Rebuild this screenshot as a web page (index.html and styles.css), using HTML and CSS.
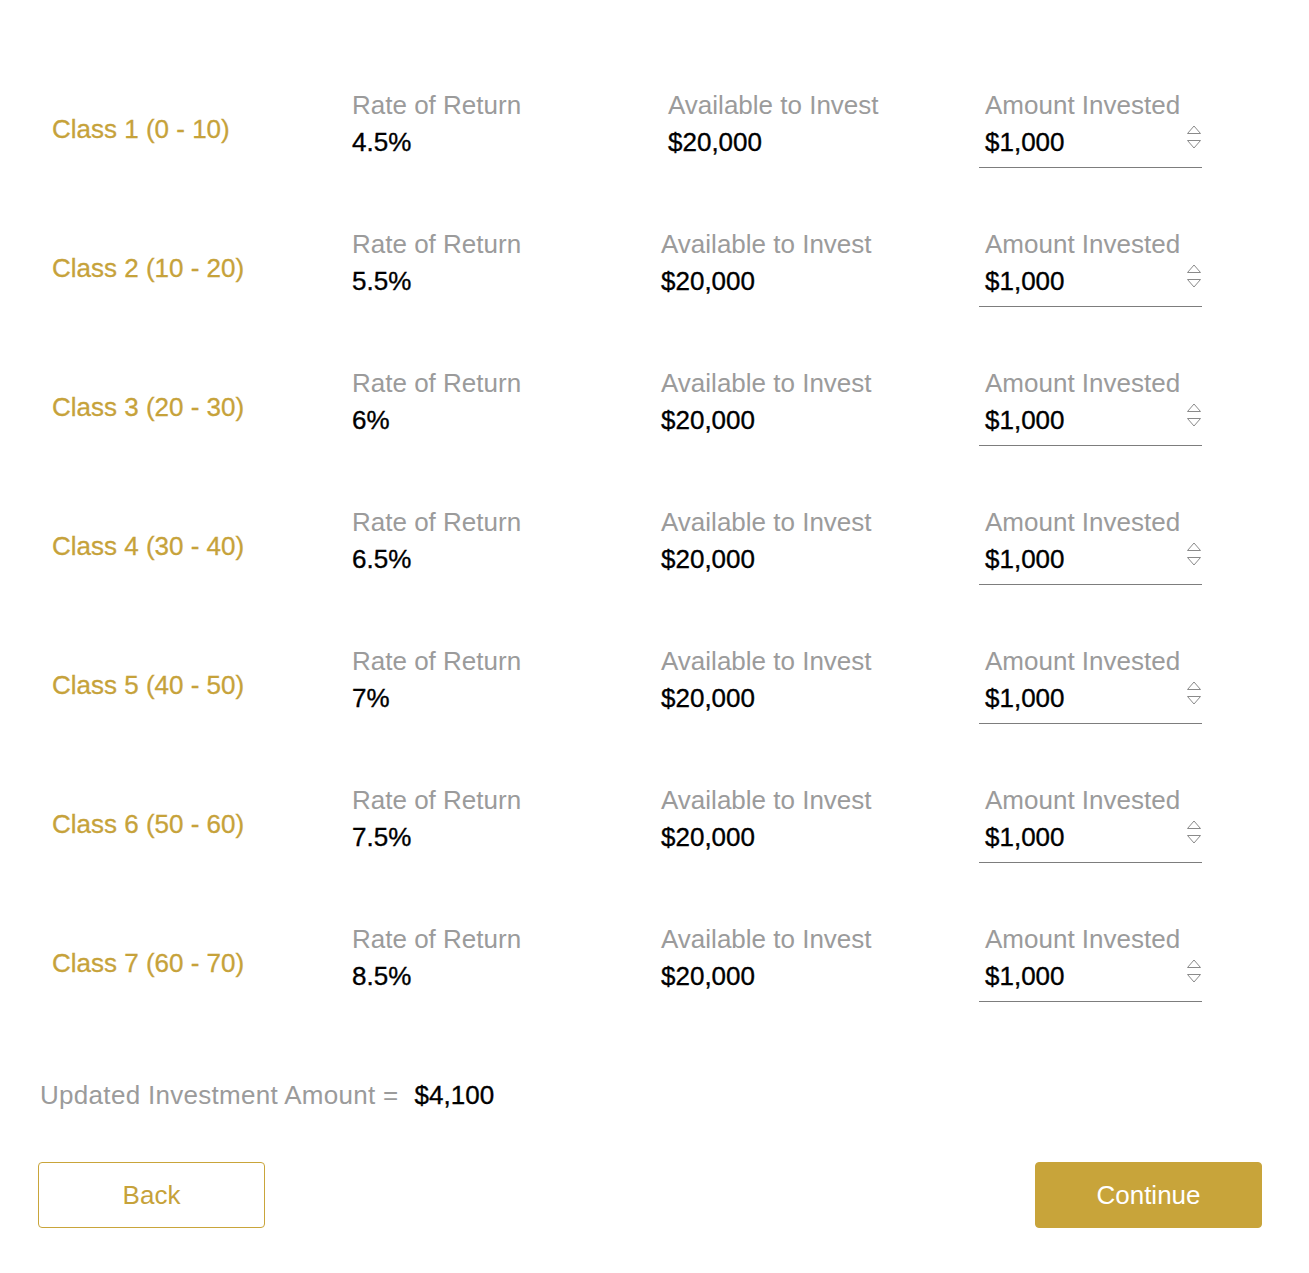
FILE: index.html
```html
<!DOCTYPE html>
<html lang="en">
<head>
<meta charset="utf-8">
<title>Investment Classes</title>
<link rel="stylesheet" href="styles.css">
</head>
<body>
<main class="page">
  <section class="classes">
    <div class="row">
      <div class="class-name">Class 1 (0 - 10)</div>
      <div class="field"><div class="label">Rate of Return</div><div class="value">4.5%</div></div>
      <div class="field field--shift"><div class="label">Available to Invest</div><div class="value">$20,000</div></div>
      <div class="field amount"><div class="label">Amount Invested</div><div class="input"><span class="value">$1,000</span><svg class="spin" width="16" height="28" viewBox="0 0 16 28"><path d="M1.5 10.5 L8 3 L14.5 10.5 Z M1.5 17.5 L8 25 L14.5 17.5 Z" fill="none" stroke="#8a8a8a" stroke-width="1"/></svg></div></div>
    </div>
    <div class="row">
      <div class="class-name">Class 2 (10 - 20)</div>
      <div class="field"><div class="label">Rate of Return</div><div class="value">5.5%</div></div>
      <div class="field"><div class="label">Available to Invest</div><div class="value">$20,000</div></div>
      <div class="field amount"><div class="label">Amount Invested</div><div class="input"><span class="value">$1,000</span><svg class="spin" width="16" height="28" viewBox="0 0 16 28"><path d="M1.5 10.5 L8 3 L14.5 10.5 Z M1.5 17.5 L8 25 L14.5 17.5 Z" fill="none" stroke="#8a8a8a" stroke-width="1"/></svg></div></div>
    </div>
    <div class="row">
      <div class="class-name">Class 3 (20 - 30)</div>
      <div class="field"><div class="label">Rate of Return</div><div class="value">6%</div></div>
      <div class="field"><div class="label">Available to Invest</div><div class="value">$20,000</div></div>
      <div class="field amount"><div class="label">Amount Invested</div><div class="input"><span class="value">$1,000</span><svg class="spin" width="16" height="28" viewBox="0 0 16 28"><path d="M1.5 10.5 L8 3 L14.5 10.5 Z M1.5 17.5 L8 25 L14.5 17.5 Z" fill="none" stroke="#8a8a8a" stroke-width="1"/></svg></div></div>
    </div>
    <div class="row">
      <div class="class-name">Class 4 (30 - 40)</div>
      <div class="field"><div class="label">Rate of Return</div><div class="value">6.5%</div></div>
      <div class="field"><div class="label">Available to Invest</div><div class="value">$20,000</div></div>
      <div class="field amount"><div class="label">Amount Invested</div><div class="input"><span class="value">$1,000</span><svg class="spin" width="16" height="28" viewBox="0 0 16 28"><path d="M1.5 10.5 L8 3 L14.5 10.5 Z M1.5 17.5 L8 25 L14.5 17.5 Z" fill="none" stroke="#8a8a8a" stroke-width="1"/></svg></div></div>
    </div>
    <div class="row">
      <div class="class-name">Class 5 (40 - 50)</div>
      <div class="field"><div class="label">Rate of Return</div><div class="value">7%</div></div>
      <div class="field"><div class="label">Available to Invest</div><div class="value">$20,000</div></div>
      <div class="field amount"><div class="label">Amount Invested</div><div class="input"><span class="value">$1,000</span><svg class="spin" width="16" height="28" viewBox="0 0 16 28"><path d="M1.5 10.5 L8 3 L14.5 10.5 Z M1.5 17.5 L8 25 L14.5 17.5 Z" fill="none" stroke="#8a8a8a" stroke-width="1"/></svg></div></div>
    </div>
    <div class="row">
      <div class="class-name">Class 6 (50 - 60)</div>
      <div class="field"><div class="label">Rate of Return</div><div class="value">7.5%</div></div>
      <div class="field"><div class="label">Available to Invest</div><div class="value">$20,000</div></div>
      <div class="field amount"><div class="label">Amount Invested</div><div class="input"><span class="value">$1,000</span><svg class="spin" width="16" height="28" viewBox="0 0 16 28"><path d="M1.5 10.5 L8 3 L14.5 10.5 Z M1.5 17.5 L8 25 L14.5 17.5 Z" fill="none" stroke="#8a8a8a" stroke-width="1"/></svg></div></div>
    </div>
    <div class="row">
      <div class="class-name">Class 7 (60 - 70)</div>
      <div class="field"><div class="label">Rate of Return</div><div class="value">8.5%</div></div>
      <div class="field"><div class="label">Available to Invest</div><div class="value">$20,000</div></div>
      <div class="field amount"><div class="label">Amount Invested</div><div class="input"><span class="value">$1,000</span><svg class="spin" width="16" height="28" viewBox="0 0 16 28"><path d="M1.5 10.5 L8 3 L14.5 10.5 Z M1.5 17.5 L8 25 L14.5 17.5 Z" fill="none" stroke="#8a8a8a" stroke-width="1"/></svg></div></div>
    </div>
  </section>

  <div class="total">
    <span class="total-label">Updated Investment Amount =</span>
    <span class="total-value">$4,100</span>
  </div>

  <div class="actions">
    <button class="btn btn--outline" type="button">Back</button>
    <button class="btn btn--solid" type="button">Continue</button>
  </div>
</main>
</body>
</html>
```

FILE: styles.css
```css
* { box-sizing: border-box; }

html, body {
  margin: 0;
  padding: 0;
  background: #ffffff;
}

body {
  font-family: "Liberation Sans", Arial, sans-serif;
  font-size: 26px;
  line-height: 39px;
  color: #000;
}

.page {
  width: 1224px;
  margin-left: 38px;
  padding-top: 87px;
  padding-bottom: 45px;
}

.classes {
  display: flex;
  flex-direction: column;
  gap: 58px;
}

.row {
  display: grid;
  grid-template-columns: 300px 309px 318px 223px;
  padding-left: 14px;
  align-items: start;
}

.class-name {
  align-self: center;
  color: #c6a23a;
  padding-top: 3px;
  -webkit-text-stroke: 0.3px #c6a23a;
}

.field {
  display: flex;
  flex-direction: column;
}

.field--shift {
  padding-left: 7px;
}

.label {
  color: #9b9b9b;
  line-height: 36px;
}

.value {
  color: #000;
  -webkit-text-stroke: 0.35px #000;
}

.amount .label {
  padding-left: 6px;
}

.input {
  display: flex;
  align-items: center;
  justify-content: space-between;
  padding: 0 0 5px 6px;
  border-bottom: 1px solid #7d7d7d;
}

.spin {
  display: block;
  margin-top: -12px;
}

.total {
  display: flex;
  gap: 16px;
  margin-top: 74px;
  padding-left: 2px;
}

.total-label {
  color: #9b9b9b;
  letter-spacing: 0.3px;
}

.total-value {
  color: #000;
  -webkit-text-stroke: 0.35px #000;
}

.actions {
  display: flex;
  justify-content: space-between;
  margin-top: 47px;
}

.btn {
  width: 227px;
  height: 66px;
  border-radius: 4px;
  font-family: "Liberation Sans", Arial, sans-serif;
  font-size: 26px;
  cursor: pointer;
}

.btn--outline {
  background: #fff;
  border: 1px solid #c9a53a;
  color: #c6a23a;
}

.btn--solid {
  background: #c8a43a;
  border: 1px solid #c8a43a;
  color: #fff;
}
```
